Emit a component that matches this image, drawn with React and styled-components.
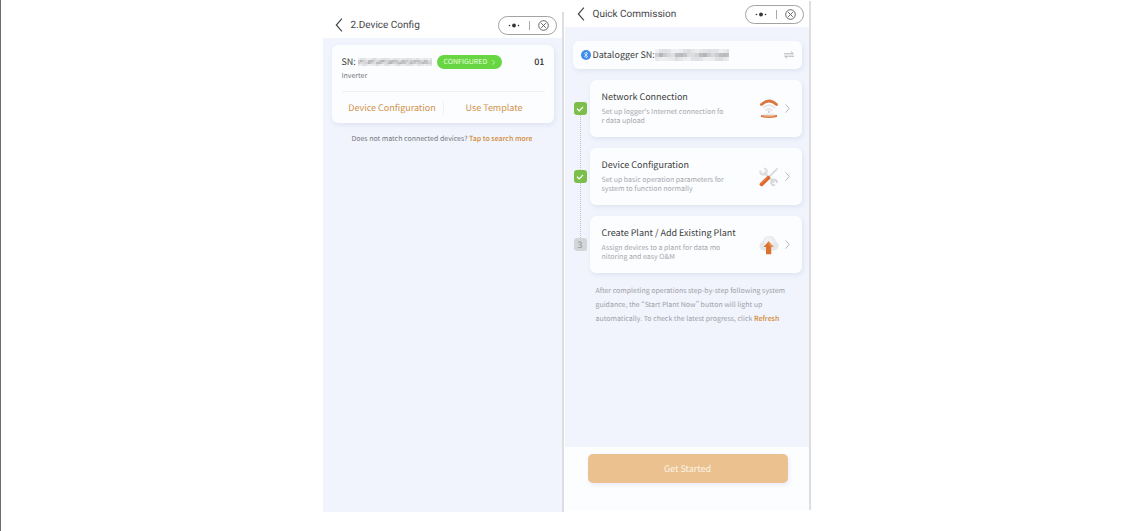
import React from "react";
import styled, { createGlobalStyle } from "styled-components";

const GlobalStyle = createGlobalStyle`
  * { box-sizing: border-box; }
  body {
    margin: 0;
    background: #fff;
    color: #3c3d40;
    font-family: "Noto Sans CJK SC", "Noto Sans", sans-serif;
    font-size: 9px;
    line-height: 12px;
    text-rendering: geometricPrecision;
    font-feature-settings: "pwid" 1;
  }
  h1, h2, p { margin: 0; font-weight: 400; }
  button { font: inherit; color: inherit; text-rendering: inherit; border: 0; padding: 0; background: none; cursor: pointer; }
  a { color: #d18a35; font-weight: 500; text-decoration: none; }
  svg { display: block; flex: none; }
`;

const Page = styled.main`
  display: flex;
  justify-content: center;
  gap: 1px;
  min-height: 100vh;
  border-left: 1px solid #6c6c6c;
`;

const Phone = styled.section`
  display: flex;
  flex-direction: column;
  flex: 0 1 ${(p) => (p.$wide ? "246px" : "241px")};
  margin: ${(p) => (p.$wide ? "1px 0 21px" : "12px 0 19px")};
  border-right: 2px solid #dddee2;
  background: #f1f4fd;
`;

const Header = styled.header`
  display: flex;
  align-items: center;
  height: 26px;
  padding: 0 5px 0 12px;
  background: #fff;
`;

const BackButton = styled.button`
  width: 16px;
  color: #444;
`;

const Title = styled.h1`
  flex: 1;
  padding-top: 2px;
  font-family: Roboto, "Noto Sans", sans-serif;
  font-size: 10px;
  line-height: 14px;
  color: #444549;
`;

const Capsule = styled.div`
  display: flex;
  align-items: center;
  justify-content: space-between;
  width: 59px;
  height: 19px;
  padding: 0 7px 0 9px;
  border: 1px solid #a3a3a3;
  border-radius: 10px;
  color: #333;
`;

const CapsuleDivider = styled.span`
  width: 1px;
  height: 9px;
  margin-left: 2px;
  background: #aaa;
`;

const Card = styled.article`
  border-radius: 6px;
  background: #fcfdff;
  box-shadow: 1px 2px 5px rgba(120, 135, 165, 0.14);
`;

const InverterCard = styled(Card)`
  margin: 7px 8px 0 9px;
  padding: 10px 9px 0 10px;
`;

const SerialRow = styled.div`
  display: flex;
  align-items: center;
  height: 14px;
`;

const StatusButton = styled.button`
  display: flex;
  align-items: center;
  justify-content: center;
  gap: 5px;
  width: 65px;
  height: 14px;
  margin-left: 5px;
  border-radius: 7px;
  background: #68d643;
  color: #eaffdf;
  font-size: 7px;
`;

const Index = styled.strong`
  margin-left: auto;
  font-weight: 500;
  color: #303133;
`;

const Kind = styled.p`
  padding: 2px 0 10px;
  border-bottom: 1px solid #f0f1f4;
  font-size: 7px;
  line-height: 10px;
  color: #77797c;
`;

const Actions = styled.div`
  display: flex;
  align-items: center;
  height: 31px;
  color: #cf924b;
`;

const Action = styled.button`
  flex: 1;
  height: 14px;
  & + & { border-left: 1px solid #f0f1f4; }
`;

const SearchHint = styled.p`
  margin-top: 11px;
  font-size: 7px;
  line-height: 10px;
  text-align: center;
  color: #77797e;
`;

const LoggerCard = styled(Card)`
  display: flex;
  align-items: center;
  height: 28px;
  margin: 14px 7px 0 8px;
  padding: 0 8px;
`;

const LoggerLabel = styled.span`
  margin-left: 2px;
`;

const SwapButton = styled.button`
  margin-left: auto;
  color: #aaacb0;
`;

const Steps = styled.ol`
  display: flex;
  flex-direction: column;
  gap: 11px;
  margin: 11px 7px 0 9px;
  padding: 0;
  list-style: none;
`;

const Step = styled.li`
  position: relative;
  display: flex;
  align-items: center;
  gap: 3px;
  &:not(:last-child)::before {
    content: "";
    position: absolute;
    top: 35px;
    bottom: -33px;
    left: 6px;
    border-left: 1px dotted #bfc2c8;
  }
`;

const Badge = styled.span`
  display: grid;
  place-items: center;
  flex: none;
  width: 13px;
  height: 13px;
  border-radius: 3px;
  background: ${(p) => (p.$done ? "#7bbf4a" : "#d3d5d8")};
  color: ${(p) => (p.$done ? "#fff" : "#8e9093")};
`;

const StepCard = styled(Card)`
  display: flex;
  align-items: center;
  flex: 1;
  height: 57px;
  padding: 0 12px;
`;

const StepText = styled.div`
  flex: 1;
`;

const StepTitle = styled.h2`
  margin-bottom: 5px;
  font-size: 9px;
  line-height: 12px;
`;

const StepNote = styled.p`
  font-size: 7px;
  line-height: 9px;
  white-space: pre-line;
  color: #a6a8ad;
`;

const StepLink = styled.button`
  display: flex;
  align-items: center;
  gap: 6px;
  color: #b5b6b9;
`;

const Guidance = styled.p`
  padding: 11px 12px 0 31px;
  font-size: 7px;
  line-height: 14px;
  color: #9ea1a8;
`;

const GuidanceLine = styled.span`
  display: block;
`;

const Footer = styled.footer`
  margin-top: auto;
  padding: 7px 21px 27px 23px;
  background: #fcfdff;
`;

const StartButton = styled.button`
  display: block;
  width: 100%;
  height: 29px;
  border-radius: 5px;
  background: #eac18f;
  box-shadow: 1px 2px 4px rgba(110, 110, 190, 0.12);
  color: #fdf5e6;
`;

function Chevron({ width, height, left, weight = 1 }) {
  return (
    <svg width={width} height={height} viewBox="0 0 6 12" fill="none" stroke="currentColor" strokeWidth={weight} aria-hidden="true">
      <path d={left ? "M5.5.5 .7 6l4.8 5.5" : "M.5.5 5.3 6 .5 11.5"} />
    </svg>
  );
}

const SHADES = [
  "#dcdcde", "#c5c5c8", "#b5b5b9", "#cbcbce", "#d9d9db", "#bcbcc0", "#c9c9cc", "#b8b8bb",
  "#d4d4d6", "#c0c0c3", "#adadb2", "#cfcfd2", "#bebec1", "#d8d8da", "#b4b4b8", "#c6c6c9",
];

function MaskedSerial({ width, cell, rows }) {
  const columns = Math.ceil(width / cell);
  const tiles = [];
  for (let y = 0; y < rows; y += 1) {
    for (let x = 0; x < columns; x += 1) {
      const edge = y === 0 || y === rows - 1;
      tiles.push(
        <rect
          key={`${x}-${y}`}
          x={x * cell}
          y={y * cell}
          width={cell}
          height={cell}
          fill={SHADES[(x * 7 + y * 3 + (x >> 2)) % SHADES.length]}
          opacity={edge ? 0.4 : 0.9}
        />
      );
    }
  }
  return (
    <svg width={width} height={rows * cell} role="img" aria-label="Hidden serial number">
      {tiles}
    </svg>
  );
}

function TopBar({ title }) {
  return (
    <Header>
      <BackButton aria-label="Back">
        <Chevron left width={8} height={14} />
      </BackButton>
      <Title>{title}</Title>
      <Capsule>
        <svg width="12" height="5" fill="currentColor" aria-hidden="true">
          <circle cx="1.5" cy="2.5" r="0.8" />
          <circle cx="6" cy="2.5" r="1.9" />
          <circle cx="10.5" cy="2.5" r="0.8" />
        </svg>
        <CapsuleDivider />
        <svg width="11" height="11" fill="none" stroke="#555" strokeWidth="0.9" aria-hidden="true">
          <circle cx="5.5" cy="5.5" r="4.8" />
          <path d="m3.2 3.2 4.6 4.6m0-4.6L3.2 7.8" />
        </svg>
      </Capsule>
    </Header>
  );
}

function NetworkIcon() {
  return (
    <svg width="20" height="20" aria-hidden="true">
      <path d="M2.5 5.5Q10-1.6 17.5 5.5" fill="none" stroke="#d97843" strokeWidth="2.8" strokeLinecap="round" />
      <path d="M4.5 8.6q5.5-5 11 0M7 11.2q3-2.8 6 0" fill="none" stroke="#e4e5e8" strokeWidth="1.8" strokeLinecap="round" />
      <circle cx="10" cy="12.8" r="1.3" fill="#d5d6da" />
      <path d="M5 14.4h10l2.5 2.2h-15z" fill="#ececef" />
      <path d="M2 16q8 1.2 16 0v2q-8 2-16 0z" fill="#dc7a3d" />
      <path d="M5 17q5 .7 10 0" fill="none" stroke="#f4bf97" strokeWidth="0.7" />
    </svg>
  );
}

function ToolsIcon() {
  return (
    <svg width="20" height="20" fill="none" strokeLinecap="round" aria-hidden="true">
      <path d="M5.6 5.8 14.8 15" stroke="#dcdde0" strokeWidth="2.4" />
      <path d="M5.9 1.6A3.2 3.2 0 1 1 1.3 4.2" stroke="#dcdde0" strokeWidth="2" />
      <path d="M17.9 15.2A2.8 2.8 0 1 0 15.2 18.2" stroke="#d5d6d9" strokeWidth="1.9" />
      <path d="M10 10 18.2 1.8" stroke="#d2d3d6" strokeWidth="1.5" />
      <path d="M2.5 17.3 9.2 10.8" stroke="#dc682d" strokeWidth="3.8" />
      <path d="M2.2 16.4 8.5 10.3" stroke="#f08b50" strokeWidth="1" />
    </svg>
  );
}

function UploadIcon() {
  return (
    <svg width="20" height="20" aria-hidden="true">
      <g fill="#e6e7e9">
        <circle cx="5.2" cy="10.8" r="4.8" />
        <circle cx="10.3" cy="7" r="6.2" />
        <circle cx="15" cy="10.8" r="4.7" />
        <path d="M5 9h10v6.5H5z" />
      </g>
      <circle cx="10" cy="6.2" r="4.6" fill="#f1f1f3" />
      <path d="m9.6 6.3 5 5.7h-2.4v7.2H7V12H4.6z" fill="#db722f" />
      <path d="m9.6 6.3 5 5.7h-2.4l-2.6-3z" fill="#ec9358" />
    </svg>
  );
}

const STEPS = [
  { title: "Network Connection", note: "Set up logger's Internet connection fo\nr data upload", Icon: NetworkIcon, done: true },
  { title: "Device Configuration", note: "Set up basic operation parameters for\nsystem to function normally", Icon: ToolsIcon, done: true },
  { title: "Create Plant / Add Existing Plant", note: "Assign devices to a plant for data mo\nnitoring and easy O&M", Icon: UploadIcon, done: false },
];

function DeviceConfig() {
  return (
    <Phone>
      <TopBar title="2.Device Config" />
      <InverterCard>
        <SerialRow>
          <span>SN:&nbsp;</span>
          <MaskedSerial width={74} cell={2} rows={4} />
          <StatusButton>
            CONFIGURED
            <Chevron width={3} height={5} weight={1.6} />
          </StatusButton>
          <Index>01</Index>
        </SerialRow>
        <Kind>Inverter</Kind>
        <Actions>
          <Action>Device Configuration</Action>
          <Action>Use Template</Action>
        </Actions>
      </InverterCard>
      <SearchHint>
        Does not match connected devices? <a href="#search">Tap to search more</a>
      </SearchHint>
    </Phone>
  );
}

function QuickCommission() {
  return (
    <Phone $wide>
      <TopBar title="Quick Commission" />
      <LoggerCard>
        <svg width="10" height="10" aria-hidden="true">
          <circle cx="5" cy="5" r="5" fill="#3f8cec" />
          <path d="M3.2 3.3 6.7 6.5 5 8V2l1.7 1.5-3.5 3.2" fill="none" stroke="#dcecff" strokeWidth="0.8" />
        </svg>
        <LoggerLabel>Datalogger SN:</LoggerLabel>
        <MaskedSerial width={74} cell={4} rows={3} />
        <SwapButton aria-label="Switch datalogger">
          <svg width="10" height="8" fill="none" stroke="currentColor" strokeWidth="0.9">
            <path d="M0 2.8h9.3L7 .6M10 5.2H.7L3 7.4" />
          </svg>
        </SwapButton>
      </LoggerCard>
      <Steps>
        {STEPS.map(({ title, note, Icon, done }, i) => (
          <Step key={title}>
            <Badge $done={done}>
              {done ? (
                <svg width="8" height="6" fill="none" stroke="currentColor" strokeWidth="1.2" aria-label="Done">
                  <path d="m1 2.8 2.2 2.1L7 1" />
                </svg>
              ) : (
                i + 1
              )}
            </Badge>
            <StepCard>
              <StepText>
                <StepTitle>{title}</StepTitle>
                <StepNote>{note}</StepNote>
              </StepText>
              <StepLink aria-label={`Open ${title}`}>
                <Icon />
                <Chevron width={5} height={9} weight={1.3} />
              </StepLink>
            </StepCard>
          </Step>
        ))}
      </Steps>
      <Guidance>
        <GuidanceLine>After completing operations step-by-step following system</GuidanceLine>
        <GuidanceLine>guidance, the “Start Plant Now” button will light up</GuidanceLine>
        <GuidanceLine>
          automatically. To check the latest progress, click <a href="#refresh">Refresh</a>
        </GuidanceLine>
      </Guidance>
      <Footer>
        <StartButton>Get Started</StartButton>
      </Footer>
    </Phone>
  );
}

export default function App() {
  return (
    <>
      <GlobalStyle />
      <Page>
        <DeviceConfig />
        <QuickCommission />
      </Page>
    </>
  );
}
